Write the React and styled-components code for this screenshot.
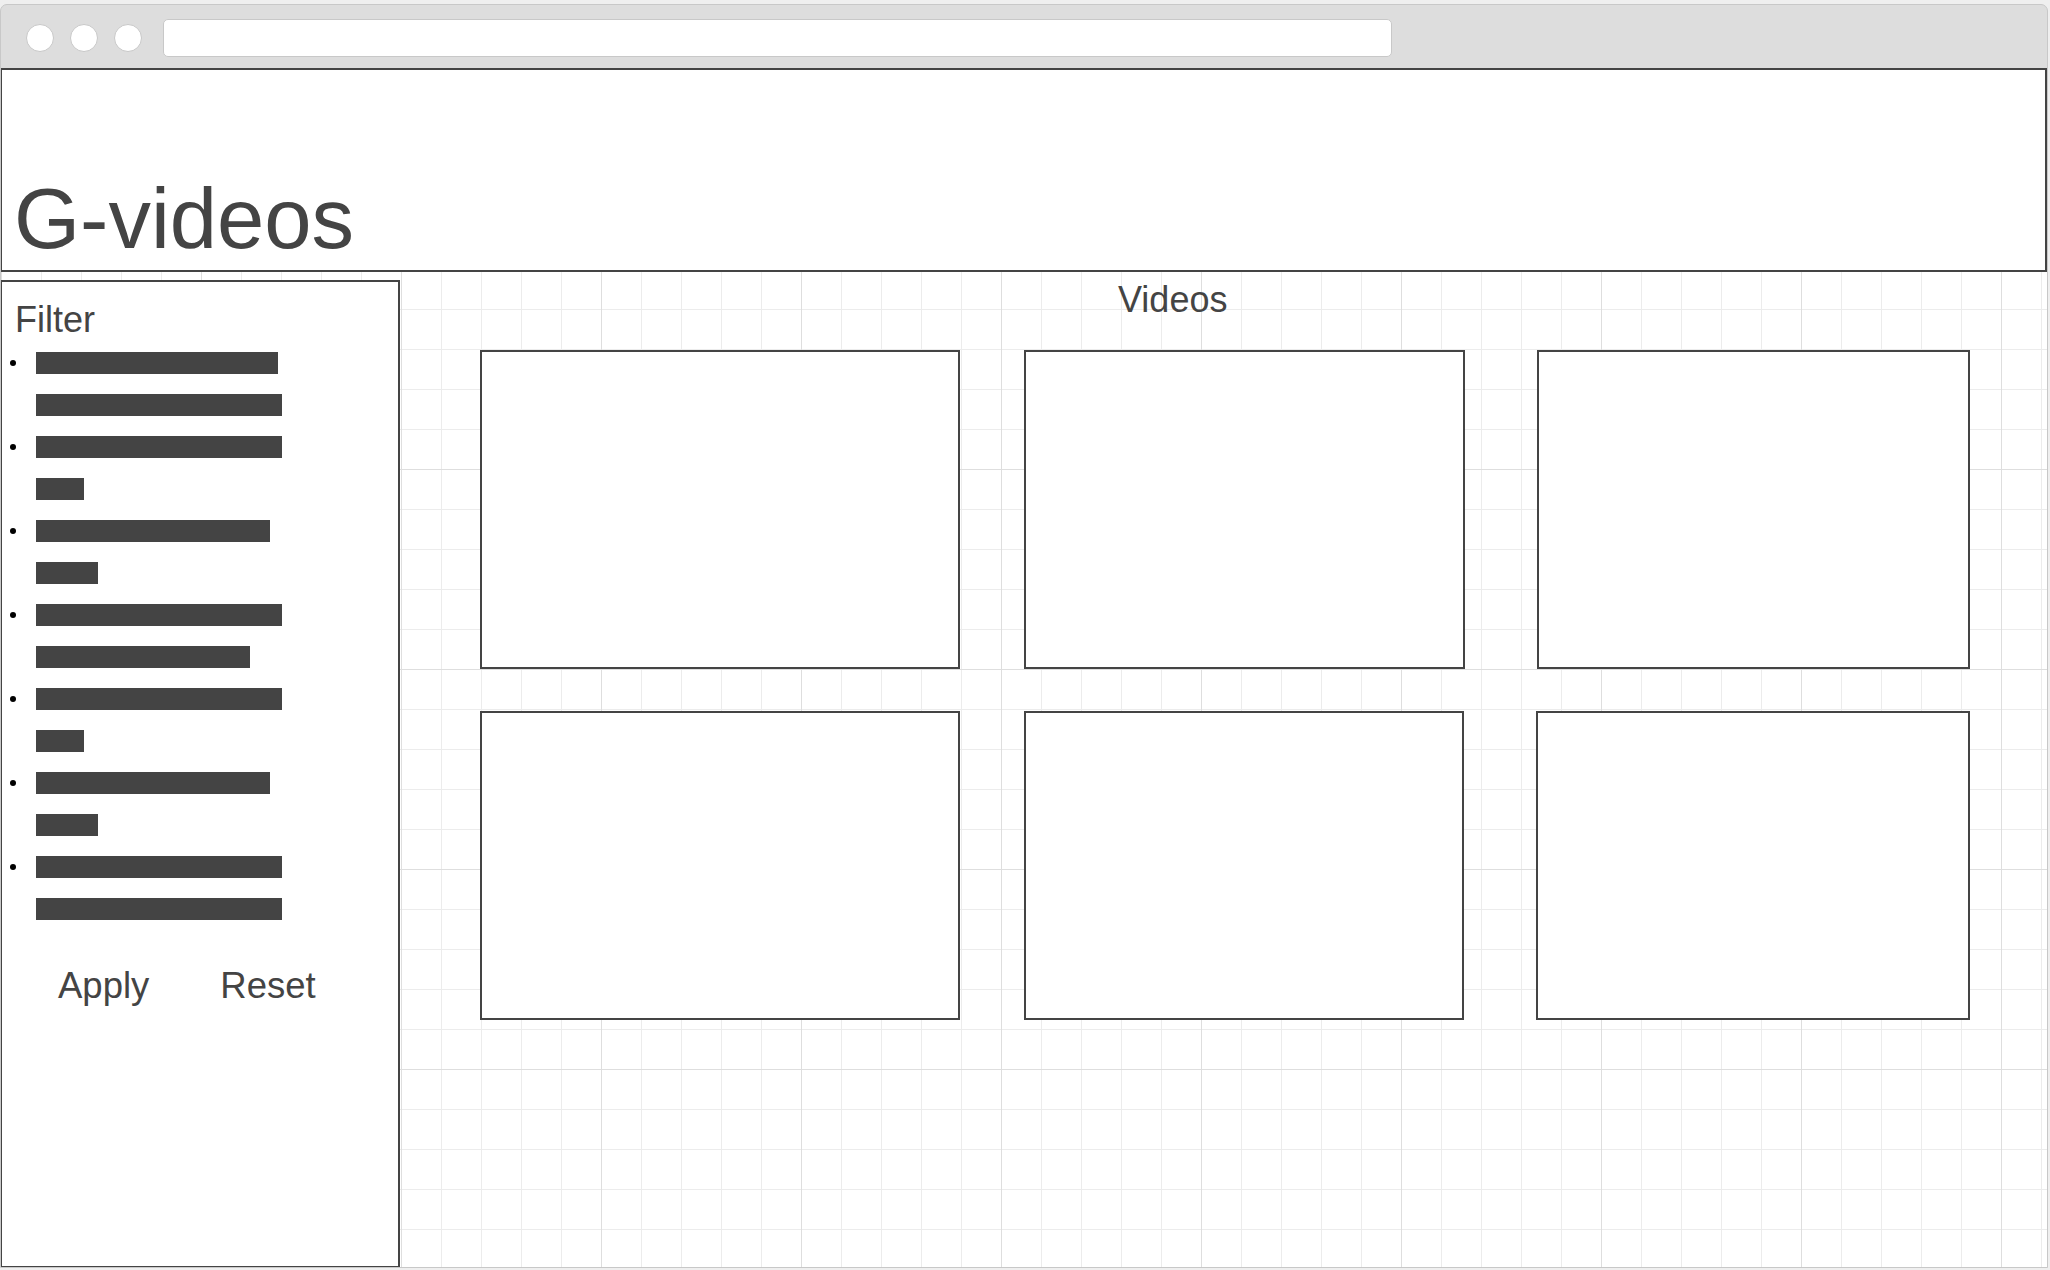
import React from "react"
import styled, { createGlobalStyle } from "styled-components"

const GlobalStyle = createGlobalStyle`
  html, body {
    margin: 0;
    padding: 0;
    background: #efefef;
    font-family: "Liberation Sans", Arial, sans-serif;
  }
`

const Window = styled.div`
  margin-top: 4px;
  width: 2048px;
  height: 1264px;
  box-sizing: border-box;
  border: 1px solid #c8c8c8;
  border-radius: 7px 7px 0 0;
  background: #dddddd;
  display: flex;
  flex-direction: column;
  overflow: hidden;
`

const Chrome = styled.div`
  height: 63px;
  flex: none;
  box-sizing: border-box;
  padding: 14px 0 0 25px;
  display: flex;
  align-items: flex-start;
`

const Dots = styled.div`
  display: flex;
  align-items: center;
  height: 38px;
  gap: 16px;
`

const Dot = styled.span`
  width: 28px;
  height: 28px;
  box-sizing: border-box;
  border-radius: 50%;
  background: #fff;
  border: 1px solid #c8c8c8;
`

const AddressBar = styled.div`
  margin-left: 21px;
  width: 1229px;
  height: 38px;
  box-sizing: border-box;
  background: #fff;
  border: 1px solid #c8c8c8;
  border-radius: 5px;
`

const Page = styled.div`
  flex: 1;
  margin-left: -1px;
  display: flex;
  flex-direction: column;
  background-color: #fff;
  background-image:
    linear-gradient(to right, #dedede 1px, transparent 1px),
    linear-gradient(to bottom, #dedede 1px, transparent 1px),
    linear-gradient(to right, #ececec 1px, transparent 1px),
    linear-gradient(to bottom, #ececec 1px, transparent 1px);
  background-size: 200px 200px, 200px 200px, 40px 40px, 40px 40px;
  background-position: 1px 1px;
`

const Header = styled.header`
  height: 204px;
  flex: none;
  box-sizing: border-box;
  border: 2px solid #444;
  background: #fff;
  display: flex;
  align-items: flex-end;
  padding: 0 0 9px 12px;
`

const Logo = styled.h1`
  margin: 0;
  font-size: 85px;
  font-weight: 400;
  line-height: 1;
  color: #444;
`

const Body = styled.div`
  flex: 1;
  display: flex;
  align-items: flex-start;
`

const Sidebar = styled.aside`
  margin-top: 8px;
  width: 400px;
  height: 988px;
  flex: none;
  box-sizing: border-box;
  border: 2px solid #444;
  background: #fff;
  padding-top: 17px;
`

const PanelTitle = styled.div`
  font-size: 36px;
  line-height: 42px;
  color: #444;
  padding-left: 13px;
`

const FilterList = styled.ul`
  list-style: none;
  margin: 11px 0 0;
  padding: 0;
  display: flex;
  flex-direction: column;
  gap: 20px;
`

const FilterItem = styled.li`
  display: flex;
  align-items: flex-start;
`

const Bullet = styled.span`
  width: 6px;
  height: 6px;
  flex: none;
  border-radius: 50%;
  background: #000;
  margin: 8px 20px 0 8px;
`

const Lines = styled.div`
  display: flex;
  flex-direction: column;
  gap: 20px;
`

const Bar = styled.span`
  display: block;
  height: 22px;
  width: ${p => p.$w}px;
  background: #444;
`

const Actions = styled.div`
  margin-top: 45px;
  padding-left: 56px;
  display: flex;
  gap: 71px;
`

const ActionButton = styled.button`
  border: none;
  background: none;
  padding: 0;
  font-family: inherit;
  font-size: 36.5px;
  line-height: 42px;
  color: #444;
  cursor: pointer;
`

const Main = styled.main`
  flex: 1;
  padding: 7px 0 0 80px;
  display: flex;
  flex-direction: column;
`

const SectionTitle = styled.div`
  font-size: 36px;
  line-height: 42px;
  color: #444;
  padding-left: 638px;
`

const Rows = styled.div`
  margin-top: 29px;
  display: flex;
  flex-direction: column;
  gap: 42px;
`

const Row = styled.div`
  display: flex;
  height: ${p => p.$h}px;
`

const Card = styled.div`
  box-sizing: border-box;
  width: ${p => p.$w}px;
  margin-left: ${p => p.$gap || 0}px;
  border: 2px solid #444;
  background: #fff;
`

const filters = [
  [242, 246],
  [246, 48],
  [234, 62],
  [246, 214],
  [246, 48],
  [234, 62],
  [246, 246],
]

const rows = [
  { h: 319, cards: [[480, 0], [441, 64], [433, 72]] },
  { h: 309, cards: [[480, 0], [440, 64], [434, 72]] },
]

export default function App() {
  return (
    <>
      <GlobalStyle />
      <Window>
        <Chrome>
          <Dots>
            <Dot />
            <Dot />
            <Dot />
          </Dots>
          <AddressBar />
        </Chrome>
        <Page>
          <Header>
            <Logo>G-videos</Logo>
          </Header>
          <Body>
            <Sidebar>
              <PanelTitle>Filter</PanelTitle>
              <FilterList>
                {filters.map((item, i) => (
                  <FilterItem key={i}>
                    <Bullet />
                    <Lines>
                      {item.map((w, j) => (
                        <Bar key={j} $w={w} />
                      ))}
                    </Lines>
                  </FilterItem>
                ))}
              </FilterList>
              <Actions>
                <ActionButton>Apply</ActionButton>
                <ActionButton>Reset</ActionButton>
              </Actions>
            </Sidebar>
            <Main>
              <SectionTitle>Videos</SectionTitle>
              <Rows>
                {rows.map((row, i) => (
                  <Row key={i} $h={row.h}>
                    {row.cards.map(([w, gap], j) => (
                      <Card key={j} $w={w} $gap={gap} />
                    ))}
                  </Row>
                ))}
              </Rows>
            </Main>
          </Body>
        </Page>
      </Window>
    </>
  )
}
